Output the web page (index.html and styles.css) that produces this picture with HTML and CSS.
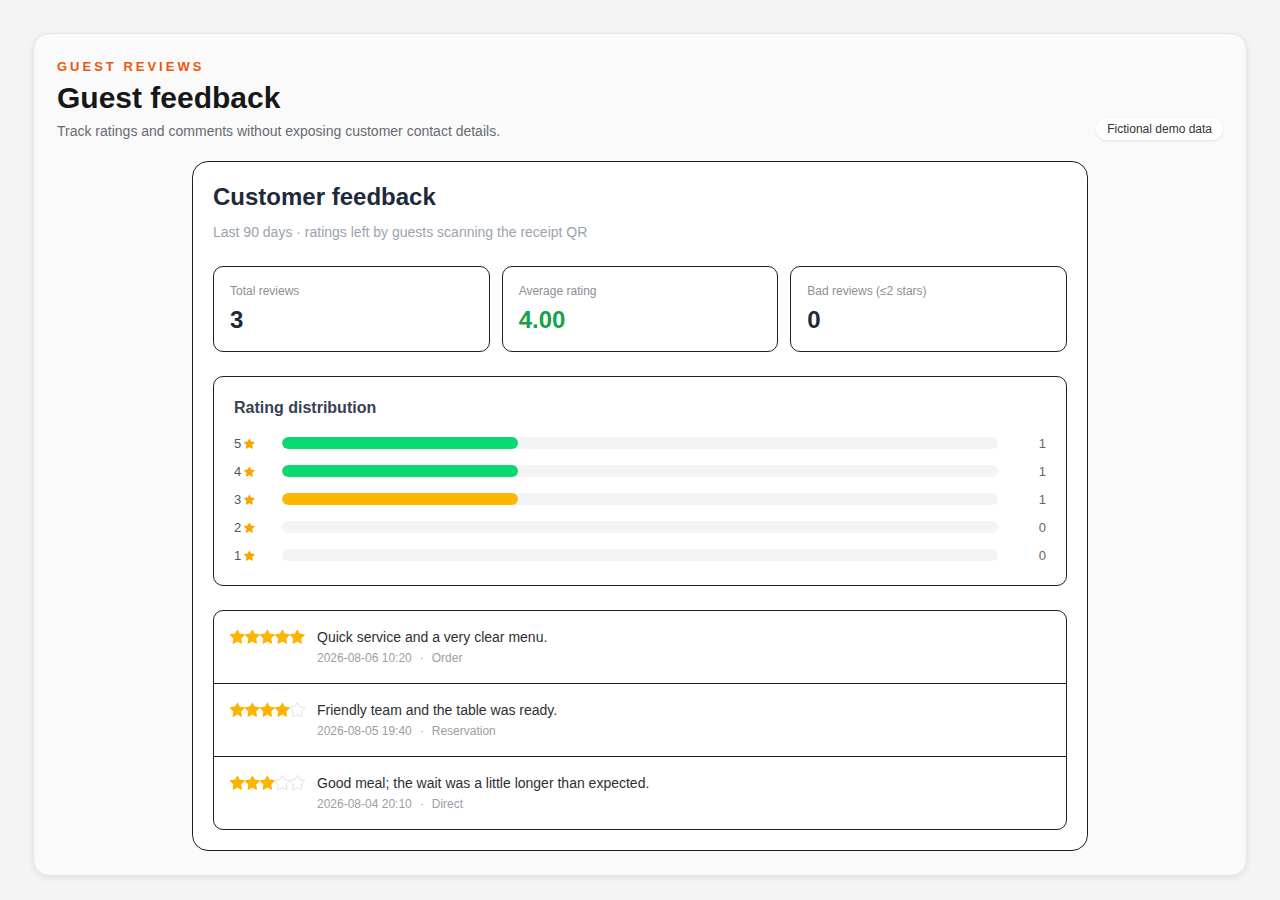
FILE: index.html
```html
<!DOCTYPE html>
<html lang="en">
<head>
<meta charset="utf-8">
<title>Guest feedback</title>
<link rel="stylesheet" href="styles.css">
</head>
<body>
<svg width="0" height="0" class="defs" aria-hidden="true">
  <defs>
    <path id="star" d="M12 2.6l2.8 5.75 6.35.92c.55.08.77.76.37 1.15l-4.6 4.48 1.09 6.32c.09.55-.49.97-.98.71L12 18.95l-5.68 2.98c-.49.26-1.07-.16-.98-.71l1.09-6.32-4.6-4.48c-.4-.39-.18-1.07.37-1.15l6.35-.92z"/>
  </defs>
</svg>
<main class="shell">
  <header class="page-head">
    <div class="head-text">
      <div class="eyebrow">GUEST REVIEWS</div>
      <h1 class="page-title">Guest feedback</h1>
      <p class="page-sub">Track ratings and comments without exposing customer contact details.</p>
    </div>
    <span class="badge">Fictional demo data</span>
  </header>

  <section class="panel">
    <h2 class="panel-title">Customer feedback</h2>
    <p class="panel-sub">Last 90 days · ratings left by guests scanning the receipt QR</p>

    <div class="stats">
      <div class="stat">
        <div class="stat-label">Total reviews</div>
        <div class="stat-value">3</div>
      </div>
      <div class="stat">
        <div class="stat-label">Average rating</div>
        <div class="stat-value good">4.00</div>
      </div>
      <div class="stat">
        <div class="stat-label">Bad reviews (≤2 stars)</div>
        <div class="stat-value">0</div>
      </div>
    </div>

    <div class="dist">
      <h3 class="dist-title">Rating distribution</h3>
      <div class="dist-rows">
        <div class="dist-row">
          <span class="dist-label">5<svg class="mini-star" viewBox="2 2.2 20 20"><use href="#star"/></svg></span>
          <span class="track"><span class="fill green" style="width:33%"></span></span>
          <span class="count">1</span>
        </div>
        <div class="dist-row">
          <span class="dist-label">4<svg class="mini-star" viewBox="2 2.2 20 20"><use href="#star"/></svg></span>
          <span class="track"><span class="fill green" style="width:33%"></span></span>
          <span class="count">1</span>
        </div>
        <div class="dist-row">
          <span class="dist-label">3<svg class="mini-star" viewBox="2 2.2 20 20"><use href="#star"/></svg></span>
          <span class="track"><span class="fill amber" style="width:33%"></span></span>
          <span class="count">1</span>
        </div>
        <div class="dist-row">
          <span class="dist-label">2<svg class="mini-star" viewBox="2 2.2 20 20"><use href="#star"/></svg></span>
          <span class="track"></span>
          <span class="count">0</span>
        </div>
        <div class="dist-row">
          <span class="dist-label">1<svg class="mini-star" viewBox="2 2.2 20 20"><use href="#star"/></svg></span>
          <span class="track"></span>
          <span class="count">0</span>
        </div>
      </div>
    </div>

    <ul class="reviews">
      <li class="review">
        <span class="stars">
          <svg class="star on" viewBox="2 2.2 20 20"><use href="#star"/></svg>
          <svg class="star on" viewBox="2 2.2 20 20"><use href="#star"/></svg>
          <svg class="star on" viewBox="2 2.2 20 20"><use href="#star"/></svg>
          <svg class="star on" viewBox="2 2.2 20 20"><use href="#star"/></svg>
          <svg class="star on" viewBox="2 2.2 20 20"><use href="#star"/></svg>
        </span>
        <div class="review-body">
          <p class="review-text">Quick service and a very clear menu.</p>
          <p class="review-meta">2026-08-06 10:20<span class="sep">·</span>Order</p>
        </div>
      </li>
      <li class="review">
        <span class="stars">
          <svg class="star on" viewBox="2 2.2 20 20"><use href="#star"/></svg>
          <svg class="star on" viewBox="2 2.2 20 20"><use href="#star"/></svg>
          <svg class="star on" viewBox="2 2.2 20 20"><use href="#star"/></svg>
          <svg class="star on" viewBox="2 2.2 20 20"><use href="#star"/></svg>
          <svg class="star off" viewBox="2 2.2 20 20"><use href="#star"/></svg>
        </span>
        <div class="review-body">
          <p class="review-text">Friendly team and the table was ready.</p>
          <p class="review-meta">2026-08-05 19:40<span class="sep">·</span>Reservation</p>
        </div>
      </li>
      <li class="review">
        <span class="stars">
          <svg class="star on" viewBox="2 2.2 20 20"><use href="#star"/></svg>
          <svg class="star on" viewBox="2 2.2 20 20"><use href="#star"/></svg>
          <svg class="star on" viewBox="2 2.2 20 20"><use href="#star"/></svg>
          <svg class="star off" viewBox="2 2.2 20 20"><use href="#star"/></svg>
          <svg class="star off" viewBox="2 2.2 20 20"><use href="#star"/></svg>
        </span>
        <div class="review-body">
          <p class="review-text">Good meal; the wait was a little longer than expected.</p>
          <p class="review-meta">2026-08-04 20:10<span class="sep">·</span>Direct</p>
        </div>
      </li>
    </ul>
  </section>
</main>
</body>
</html>
```

FILE: styles.css
```css
* { box-sizing: border-box; }

html, body {
  margin: 0;
  padding: 0;
}

body {
  background: #f4f4f5;
  font-family: "Liberation Sans", Arial, sans-serif;
  color: #1f2937;
  padding: 33px 33px 24px;
}

.defs {
  position: absolute;
  width: 0;
  height: 0;
  overflow: hidden;
}

.shell {
  background: #fafafa;
  border: 1px solid #e6e6e8;
  border-radius: 16px;
  box-shadow: 0 2px 6px rgba(0, 0, 0, 0.08);
  padding: 23px 23px 24px;
}

.page-head {
  display: flex;
  justify-content: space-between;
  align-items: flex-end;
}

.eyebrow {
  color: #ea580c;
  font-size: 13px;
  font-weight: 700;
  letter-spacing: 3px;
  line-height: 20px;
  margin-bottom: 4px;
}

.page-title {
  margin: 0;
  font-size: 30px;
  line-height: 34px;
  font-weight: 700;
  color: #171717;
}

.page-sub {
  margin: 6px 0 0;
  font-size: 14px;
  line-height: 20px;
  color: #666b73;
}

.badge {
  background: #fff;
  border-radius: 999px;
  padding: 4px 11px;
  font-size: 12px;
  line-height: 14px;
  color: #333;
  box-shadow: 0 1px 3px rgba(0, 0, 0, 0.1);
  margin-bottom: 1px;
}

.panel {
  max-width: 896px;
  margin: 20px auto 0;
  background: #fff;
  border: 1px solid #1f1f1f;
  border-radius: 16px;
  padding: 20px 20px 20px;
}

.panel-title {
  margin: 0;
  font-size: 24px;
  line-height: 30px;
  font-weight: 700;
  color: #1e293b;
}

.panel-sub {
  margin: 10px 0 0;
  font-size: 14px;
  line-height: 20px;
  color: #9ca3af;
}

.stats {
  display: grid;
  grid-template-columns: repeat(3, 1fr);
  gap: 12px;
  margin-top: 24px;
}

.stat {
  border: 1px solid #1f1f1f;
  border-radius: 10px;
  padding: 16px 16px;
  height: 86px;
}

.stat-label {
  font-size: 12px;
  line-height: 17px;
  color: #8b8f96;
}

.stat-value {
  margin-top: 6px;
  font-size: 24px;
  line-height: 28px;
  font-weight: 700;
  color: #1e293b;
}

.stat-value.good { color: #16a34a; }

.dist {
  margin-top: 24px;
  border: 1px solid #1f1f1f;
  border-radius: 10px;
  padding: 20px 20px 16px;
}

.dist-title {
  margin: 0;
  font-size: 16px;
  line-height: 22px;
  font-weight: 700;
  color: #374151;
}

.dist-rows {
  margin-top: 10px;
}

.dist-row {
  display: grid;
  grid-template-columns: 36px 1fr 36px;
  gap: 12px;
  align-items: center;
  height: 28px;
}

.dist-label {
  display: flex;
  align-items: center;
  gap: 3px;
  font-size: 13px;
  color: #555;
}

.mini-star {
  width: 11px;
  height: 11px;
  fill: #f6a800;
}

.track {
  display: block;
  height: 12px;
  background: #f3f4f6;
  border-radius: 6px;
  overflow: hidden;
}

.fill {
  display: block;
  height: 100%;
  border-radius: 6px;
}

.fill.green { background: #0ad971; }
.fill.amber { background: #fdb702; }

.count {
  text-align: right;
  font-size: 13px;
  color: #666;
}

.reviews {
  list-style: none;
  margin: 24px 0 0;
  padding: 0;
  border: 1px solid #1f1f1f;
  border-radius: 10px;
}

.review {
  display: flex;
  align-items: flex-start;
  gap: 12px;
  padding: 16px 16px;
  border-top: 1px solid #1f1f1f;
}

.review:first-child { border-top: none; }

.stars {
  display: flex;
  gap: 0;
  padding-top: 2px;
}

.star {
  width: 15px;
  height: 15px;
}

.star.on { fill: #fbb400; }

.star.off {
  fill: none;
  stroke: #dcdde0;
  stroke-width: 1.2;
}

.review-text {
  margin: 0;
  font-size: 14px;
  line-height: 20px;
  color: #2d2f33;
}

.review-meta {
  margin: 2px 0 0;
  font-size: 12px;
  line-height: 18px;
  color: #9a9ea5;
}

.sep {
  margin: 0 8px;
}
```
